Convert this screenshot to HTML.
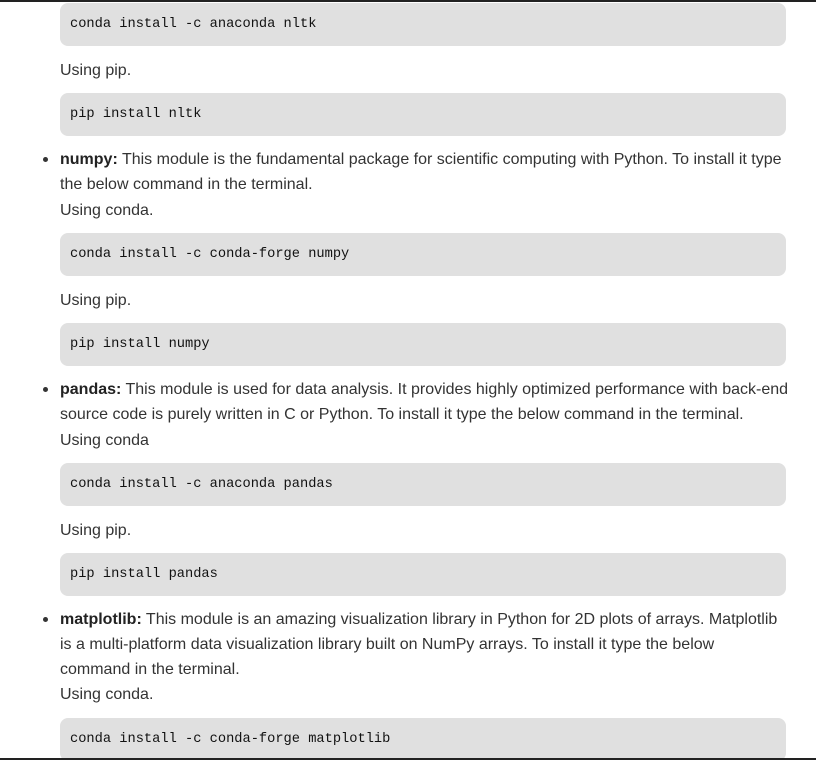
<!DOCTYPE html>
<html><head><style>
html,body{margin:0;padding:0;width:816px;height:760px;overflow:hidden;background:#fff;position:relative}
.top{position:absolute;left:0;top:0;width:816px;height:2px;background:#222}
.bot{position:absolute;left:0;top:758px;width:816px;height:2px;background:#222}
.code{position:absolute;left:60px;width:726px;height:43px;background:#e0e0e0;border-radius:8px;font-family:"Liberation Mono",monospace;font-size:13.7px;color:#111;line-height:44px;padding-left:10px;box-sizing:border-box;white-space:nowrap}
.t{position:absolute;left:60px;font-family:"Liberation Sans",sans-serif;font-size:16px;color:#333;line-height:25px;height:25px;white-space:nowrap}
b{color:#222}
.dot{position:absolute;left:43px;width:5px;height:5px;border-radius:50%;background:#333}
</style></head><body>
<div class="top"></div>
<div class="code" style="top:3px">conda install -c anaconda nltk</div>
<div class="t" style="top:58px">Using pip.</div>
<div class="code" style="top:93px">pip install nltk</div>
<div class="dot" style="top:157px"></div>
<div class="t" style="top:147px"><b>numpy:</b> This module is the fundamental package for scientific computing with Python. To install it type</div>
<div class="t" style="top:172px">the below command in the terminal.</div>
<div class="t" style="top:198px">Using conda.</div>
<div class="code" style="top:233px">conda install -c conda-forge numpy</div>
<div class="t" style="top:288px">Using pip.</div>
<div class="code" style="top:323px">pip install numpy</div>
<div class="dot" style="top:387px"></div>
<div class="t" style="top:377px"><b>pandas:</b> This module is used for data analysis. It provides highly optimized performance with back-end</div>
<div class="t" style="top:402px">source code is purely written in C or Python. To install it type the below command in the terminal.</div>
<div class="t" style="top:428px">Using conda</div>
<div class="code" style="top:463px">conda install -c anaconda pandas</div>
<div class="t" style="top:518px">Using pip.</div>
<div class="code" style="top:553px">pip install pandas</div>
<div class="dot" style="top:617px"></div>
<div class="t" style="top:607px"><b>matplotlib:</b> This module is an amazing visualization library in Python for 2D plots of arrays. Matplotlib</div>
<div class="t" style="top:632px">is a multi-platform data visualization library built on NumPy arrays. To install it type the below</div>
<div class="t" style="top:657px">command in the terminal.</div>
<div class="t" style="top:682px">Using conda.</div>
<div class="code" style="top:718px">conda install -c conda-forge matplotlib</div>
<div class="bot"></div>
</body></html>
